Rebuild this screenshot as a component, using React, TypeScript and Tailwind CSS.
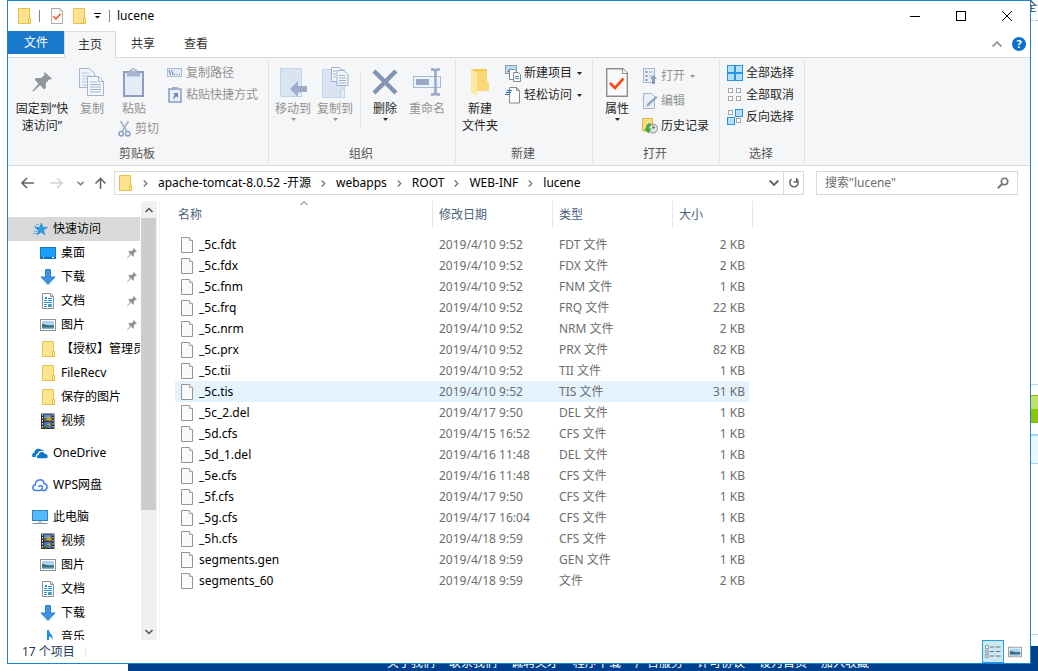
import type { ReactNode } from "react";
import clsx from "clsx";

type IconProps = { className?: string };

const files = [
  { name: "_5c.fdt", date: "2019/4/10 9:52", type: "FDT 文件", size: "2 KB" },
  { name: "_5c.fdx", date: "2019/4/10 9:52", type: "FDX 文件", size: "2 KB" },
  { name: "_5c.fnm", date: "2019/4/10 9:52", type: "FNM 文件", size: "1 KB" },
  { name: "_5c.frq", date: "2019/4/10 9:52", type: "FRQ 文件", size: "22 KB" },
  { name: "_5c.nrm", date: "2019/4/10 9:52", type: "NRM 文件", size: "2 KB" },
  { name: "_5c.prx", date: "2019/4/10 9:52", type: "PRX 文件", size: "82 KB" },
  { name: "_5c.tii", date: "2019/4/10 9:52", type: "TII 文件", size: "1 KB" },
  { name: "_5c.tis", date: "2019/4/10 9:52", type: "TIS 文件", size: "31 KB" },
  { name: "_5c_2.del", date: "2019/4/17 9:50", type: "DEL 文件", size: "1 KB" },
  { name: "_5d.cfs", date: "2019/4/15 16:52", type: "CFS 文件", size: "1 KB" },
  { name: "_5d_1.del", date: "2019/4/16 11:48", type: "DEL 文件", size: "1 KB" },
  { name: "_5e.cfs", date: "2019/4/16 11:48", type: "CFS 文件", size: "1 KB" },
  { name: "_5f.cfs", date: "2019/4/17 9:50", type: "CFS 文件", size: "1 KB" },
  { name: "_5g.cfs", date: "2019/4/17 16:04", type: "CFS 文件", size: "1 KB" },
  { name: "_5h.cfs", date: "2019/4/18 9:59", type: "CFS 文件", size: "1 KB" },
  { name: "segments.gen", date: "2019/4/18 9:59", type: "GEN 文件", size: "1 KB" },
  { name: "segments_60", date: "2019/4/18 9:59", type: "文件", size: "2 KB" },
];

const hoveredFile = "_5c.tis";
const crumbs = ["apache-tomcat-8.0.52 -开源", "webapps", "ROOT", "WEB-INF", "lucene"];
const footerLinks = ["关于我们", "联系我们", "诚聘英才", "程序下载", "广告服务", "许可协议", "设为首页", "加入收藏"];

/* ---------- icons ---------- */

function FolderIcon({ className = "h-4 w-4" }: IconProps) {
  return (
    <svg viewBox="0 0 16 16" className={className} aria-hidden="true">
      <path d="M2.5.5h11v9.5h1v5.5h-12z" fill="#ffe391" stroke="#e9c04b" />
      <path d="M12.5 15V10.5h2V15z" fill="#ffe9a6" stroke="#e9c04b" />
    </svg>
  );
}

function PageIcon({ className = "h-4 w-3" }: IconProps) {
  return (
    <svg viewBox="0 0 12 16" className={className} aria-hidden="true">
      <path d="M.5.5h8l3 3v12H.5z" fill="#f9fafa" stroke="#949494" />
      <path d="M8.5.5v3h3" fill="#fff" stroke="#a5a5a5" />
    </svg>
  );
}

function CheckPageIcon({ className }: IconProps) {
  return (
    <svg viewBox="0 0 22 29" className={className} aria-hidden="true">
      <path d="M.7.7h16l4.6 4.6v23H.7z" fill="#f8fafb" stroke="#8d8d8d" strokeWidth="1.4" />
      <path d="M16.5.7v4.8h4.8" fill="#fff" stroke="#8d8d8d" />
      <path d="M4 15l5 5 8.5-9.5" fill="none" stroke="#f4511e" strokeWidth="2.8" />
    </svg>
  );
}

function PinIcon({ className }: IconProps) {
  return (
    <svg viewBox="0 0 20 20" className={className} fill="#8f979e" aria-hidden="true">
      <path d="M12.500 0l7.500 6.500-2 1.200-1-.3-3.300 4 .3 4.300-1.700 1.700L8 13.200 1.200 19.800.3 19l6.200-7.200-4-4.300L4 6l5 .1 3.700-3.300-.7-1.600z" />
    </svg>
  );
}

function CopyIcon({ className }: IconProps) {
  return (
    <svg viewBox="0 0 26 29" className={className} aria-hidden="true" stroke="#a5b5d1">
      <path d="M.5.5h10l5 5v14H.5z" fill="#eef3fa" />
      <path d="M3 5h7M3 8h9M3 11h9M3 14h9M3 17h9" stroke="#bccbe2" />
      <path d="M8.500 8.500h11l5 5v14h-16z" fill="#f4f8fd" />
      <path d="M19.500 8.500v5h5" fill="none" />
      <path d="M11 14h7M11 16.500h11M11 19h11M11 21.500h11M11 24h11" />
    </svg>
  );
}

function PasteIcon({ className }: IconProps) {
  return (
    <svg viewBox="0 0 22 29" className={className} aria-hidden="true">
      <rect x="1" y="4" width="19" height="24" fill="#e4ecf8" stroke="#8c9dc0" strokeWidth="2" />
      <path d="M4 4.500h13v4H4zM7 1.500h7v3H7z" fill="#a8b4cb" />
      <circle cx="10.500" cy="2" r="2" fill="#a8b4cb" />
      <circle cx="10.500" cy="2.500" r="1" fill="#f5f6f7" />
    </svg>
  );
}

function ScissorsIcon({ className }: IconProps) {
  return (
    <svg viewBox="0 0 13 16" className={className} fill="none" stroke="#8fa2c1" strokeWidth="1.600" aria-hidden="true">
      <path d="M2.500 0L9 10.500M10.500 0L4 10.500" stroke="#a2b1c9" />
      <circle cx="3.200" cy="12.700" r="2.200" />
      <circle cx="9.800" cy="12.700" r="2.200" />
    </svg>
  );
}

function CopyPathIcon({ className }: IconProps) {
  return (
    <svg viewBox="0 0 16 10" className={className} aria-hidden="true">
      <rect x=".5" y=".5" width="14" height="8" fill="#e3ebf7" stroke="#a9b9d5" />
      <path d="M2 2l1.500 5M4.500 2L6 7" stroke="#6c7fa6" />
      <path d="M7 6.500h1M9.500 6.500h1M12 6.500h1" stroke="#6c7fa6" />
    </svg>
  );
}

function PasteShortcutIcon({ className }: IconProps) {
  return (
    <svg viewBox="0 0 14 16" className={className} aria-hidden="true">
      <rect x="1" y="2" width="12" height="13" fill="#eaf1fb" stroke="#8fa2c5" strokeWidth="1.600" />
      <path d="M4 0h6v3H4z" fill="#a2afc9" />
      <path d="M5 6h5v5l-1.700-1.700C7 10.300 6.300 11.500 6 13c-1-2.500-.500-4 .800-5.200z" fill="#6f86b2" />
    </svg>
  );
}

function MoveToIcon({ className }: IconProps) {
  return (
    <svg viewBox="0 0 27 29" className={className} aria-hidden="true">
      <path d="M.5.5h21v28H.5z" fill="#d9e4f3" stroke="#c5d4e9" />
      <path d="M17 24.500h4.500v4H17z" fill="#e5edf8" stroke="#c0cfe6" />
      <path d="M10 21l8-8v5h9v6h-9v5z" fill="#9dadc9" />
    </svg>
  );
}

function CopyToIcon({ className }: IconProps) {
  return (
    <svg viewBox="0 0 27 31" className={className} aria-hidden="true">
      <path d="M.5 2.500h22v28H.5z" fill="#d8e3f3" stroke="#c5d4e9" />
      <path d="M18.500 22.500h4v8h-4z" fill="#e5edf8" stroke="#c0cfe6" />
      <g fill="#f1f6fc" stroke="#9fb0cd">
        <path d="M9.500.5h8l3 3v11h-11z" />
        <path d="M15 3.500h7l4 4v11H15z" />
        <path d="M17 8.500h6M17 11h7M17 13.500h7M17 16h7M11 4h3M11 7h3M11 10h3" />
      </g>
    </svg>
  );
}

function DeleteIcon({ className }: IconProps) {
  return (
    <svg viewBox="0 0 26 26" className={className} aria-hidden="true">
      <path d="M2 2l22 22M24 2L2 24" stroke="#8293b6" strokeWidth="4.500" />
    </svg>
  );
}

function RenameIcon({ className }: IconProps) {
  return (
    <svg viewBox="0 0 29 28" className={className} fill="none" aria-hidden="true">
      <rect x=".5" y="8.500" width="27" height="11" fill="#edf3fb" stroke="#a9bad6" />
      <path d="M3 11h13v6H3z" fill="#96a8c6" />
      <path d="M18 1.500h3l1.500 1.500L24 1.500h3M22.500 3v22M18 26.500h3l1.500-1.500 1.500 1.500h3" stroke="#96a8c6" strokeWidth="2.500" />
    </svg>
  );
}

function BigFolderIcon({ className }: IconProps) {
  return (
    <svg viewBox="0 0 19 28" className={className} aria-hidden="true">
      <path d="M0 1h16v12l2 2v8H6z" fill="#f5c956" />
      <path d="M0 1l6 3v24l-6-4z" fill="#ffe89f" />
      <path d="M6 3h10v11l2 1v8H6z" fill="#f9d775" />
    </svg>
  );
}

function NewItemIcon({ className }: IconProps) {
  return (
    <svg viewBox="0 0 16 17" className={className} aria-hidden="true">
      <rect x=".5" y=".5" width="11" height="8" fill="#b6dcf4" stroke="#8c9da8" />
      <path d="M2 7l3-3 3 3z" fill="#447a8c" />
      <path d="M4.500 4.500h5l2 2v8h-7z" fill="#fff" stroke="#8a8a8a" />
      <path d="M8.500 7.500h5l2 2v7h-7z" fill="#f3f8fc" stroke="#8a8a8a" />
      <path d="M10 11.500h4M10 13.500h4" stroke="#4a90c8" />
    </svg>
  );
}

function EasyAccessIcon({ className }: IconProps) {
  return (
    <svg viewBox="0 0 16 17" className={className} aria-hidden="true">
      <path d="M4.500.5h7l3 3v12.500h-10z" fill="#fafcfd" stroke="#8a8a8a" />
      <path d="M11.500.5v3h3" fill="none" stroke="#8a8a8a" />
      <path d="M2 3.500h5M1 5.500h5M0 7.500h4" stroke="#1e6fc4" />
    </svg>
  );
}

function OpenIcon({ className }: IconProps) {
  return (
    <svg viewBox="0 0 15 16" className={className} aria-hidden="true">
      <rect x=".5" y=".5" width="11" height="14" fill="#eaf0f9" stroke="#a5b5d0" />
      <path d="M2.500 3h2v2h-2zM2.500 7h2v2h-2zM2.500 11h2v2h-2z" fill="#7d90b5" />
      <path d="M6 4h4M6 8h4" stroke="#a5b5d0" />
      <path d="M7 11l3.500-4 3.500 4h-2v5H9v-5z" fill="#8b9dbf" />
    </svg>
  );
}

function EditIcon({ className }: IconProps) {
  return (
    <svg viewBox="0 0 15 16" className={className} aria-hidden="true">
      <path d="M.5.5h8l3 3v12H.5z" fill="#e8eff9" stroke="#a5b5d0" />
      <path d="M3 14l1.500-3.500L13 3l1.500 1.500L6 12.500z" fill="#8fa3c6" />
    </svg>
  );
}

function HistoryIcon({ className }: IconProps) {
  return (
    <svg viewBox="0 0 16 16" className={className} aria-hidden="true">
      <path d="M.5.5h10V13H.5z" fill="#fbdc7f" stroke="#dcb545" />
      <circle cx="11" cy="10.500" r="4.500" fill="#e3e5e7" stroke="#85888c" />
      <path d="M11 7.500v3l2-1.500" stroke="#555" fill="none" />
      <path d="M8 5.500C4.500 6 4 8.500 4.500 11l-2 .3 4 3.700 2.500-4.300-2 .2C6.500 9 7 8 9 7.500z" fill="#2fb53a" stroke="#1b8226" strokeWidth=".4" />
    </svg>
  );
}

function TilesIcon({ filled, className }: IconProps & { filled: number[] }) {
  return (
    <svg viewBox="0 0 16 16" className={className} aria-hidden="true">
      {[0, 1, 2, 3].map((i) => {
        const on = filled.includes(i);
        return (
          <rect
            key={i}
            x={(i % 2) * 8 + (on ? 0.5 : 1.5)}
            y={Math.floor(i / 2) * 8 + (on ? 0.5 : 1.5)}
            width={on ? 7 : 4}
            height={on ? 7 : 4}
            fill={on ? "#b5e0fb" : "#fbfbfb"}
            stroke={on ? "#2b93e6" : "#a8a8a8"}
          />
        );
      })}
    </svg>
  );
}

function StarIcon() {
  return (
    <svg viewBox="0 0 16 16" className="h-4 w-4" aria-hidden="true">
      <path d="M9.500 2l1.300 4.200 4.700.2-3.900 2.600 1.200 4.800-3.700-2.700-4 2.900 1.400-4.600L3 6.600l4.600-.3z" fill="#2a9be6" stroke="#1781cc" strokeWidth=".6" />
      <path d="M4 3.500h3M2 5.500h2M1 12.500h4M2 10.500h3" stroke="#5bb3ee" />
    </svg>
  );
}

function DesktopIcon() {
  return (
    <svg viewBox="0 0 16 16" className="h-4 w-4" aria-hidden="true">
      <rect x=".5" y="2.500" width="15" height="11" fill="#1a9fff" stroke="#1078c8" />
      <path d="M1 12.500h14" stroke="#0a5fa6" />
      <path d="M3 12.500h1M12 12.500h2" stroke="#fff" />
    </svg>
  );
}

function DownloadIcon() {
  return (
    <svg viewBox="0 0 16 16" className="h-4 w-4" aria-hidden="true">
      <path d="M5.500.5h5v7.500h4.500L8 15.500 1 8h4.500z" fill="#3a94e4" stroke="#2b7fd0" />
    </svg>
  );
}

function DocumentIcon() {
  return (
    <svg viewBox="0 0 16 16" className="h-4 w-4" aria-hidden="true">
      <path d="M2.500.5h8l3 3v12h-11z" fill="#fff" stroke="#8f8f8f" />
      <path d="M10.500.5v3h3" fill="none" stroke="#8f8f8f" />
      <path d="M4 7.500h3M8 5.500h4M8 7.500h4M4 9.500h8M4 11.500h3M4 13.500h3" stroke="#2196e8" />
      <path d="M5 4h2v2H5z" fill="#2196e8" />
      <path d="M8 11h4v3H8z" fill="#5d9ab0" />
    </svg>
  );
}

function PictureIcon({ className = "h-4 w-4" }: IconProps) {
  return (
    <svg viewBox="0 0 16 16" className={className} aria-hidden="true">
      <rect x=".5" y="2.500" width="15" height="11" fill="#fff" stroke="#919191" />
      <path d="M2 4h12v8H2z" fill="#a9d3f5" />
      <path d="M2 7c3-.5 4 2 12 1v3H2z" fill="#3d6c76" />
      <path d="M2 10.500h12V12H2z" fill="#7fb0cb" />
    </svg>
  );
}

function VideoIcon() {
  return (
    <svg viewBox="0 0 16 16" className="h-4 w-4" aria-hidden="true">
      <path d="M1 .5h13.500V16H1z" fill="#333" />
      <path d="M2.500 1v15M13 1v15" stroke="#eee" strokeDasharray="1.500 1.500" />
      <path d="M4 1.500h7.500v6H4z" fill="#5b8ddb" />
      <path d="M4 9h7.500v6H4z" fill="#4673c2" />
      <path d="M6 5l2-2 3.500 3v1.500H6zM7 12l2-2 2 3z" fill="#d9a520" />
      <path d="M4 5.500h3v2H4zM4 13h4v2H4z" fill="#3d7a3a" />
    </svg>
  );
}

function OneDriveIcon() {
  return (
    <svg viewBox="0 0 16 16" className="h-4 w-4" fill="#0f75d1" aria-hidden="true">
      <path d="M.5 12C-.5 9 1 7.800 2.500 7.600 2.500 4.500 6 2.500 9 4.500c1.500-.3 2.500.5 3 1.700C8 5 6 7 5.500 9 3.500 9.500 3.500 11 4 12z" />
      <path d="M6.500 13.300c-2.500-.3-2-3.300.2-3.300.3-3.500 5.300-4 6.300-.9 2.800-.2 3.700 3.200 1.500 4.200z" />
    </svg>
  );
}

function CloudIcon() {
  return (
    <svg viewBox="0 0 16 16" className="h-4 w-4" fill="none" stroke="#3f7de8" strokeWidth="1.500" aria-hidden="true">
      <path d="M10.500 9.500c.3 2-1 4-3 4H4C0 13.500 0 8.500 3.300 8 3 2 11 1 12 6.500c4 .5 4 6.500 0 7H10" />
      <path d="M6.500 10c.5-1.500 2.500-1.800 4-.3" />
    </svg>
  );
}

function ComputerIcon() {
  return (
    <svg viewBox="0 0 16 16" className="h-4 w-4" aria-hidden="true">
      <rect x=".5" y="1.500" width="15" height="10" fill="#52bafb" stroke="#3282b8" />
      <path d="M6 13h4" stroke="#8aa5b5" />
      <path d="M.5 14.500h15" stroke="#7e98a8" />
    </svg>
  );
}

function MusicIcon() {
  return (
    <svg viewBox="0 0 16 16" className="h-4 w-4" aria-hidden="true">
      <path d="M7 1h2c0 4 4.500 4 3.500 10.500C12 8.500 11 7.500 9 7.500V14H7z" fill="#1690ea" />
      <ellipse cx="6.500" cy="13.500" rx="3" ry="2" fill="#1690ea" />
    </svg>
  );
}

function Chevron({ className, thin }: IconProps & { thin?: boolean }) {
  return (
    <svg
      viewBox="0 0 8 8"
      className={className}
      fill="none"
      stroke="currentColor"
      strokeWidth={thin ? 1 : 1.5}
      aria-hidden="true">
      <path d="M.5 2L4 5.500 7.500 2" />
    </svg>
  );
}

function Caret({ className }: IconProps) {
  return (
    <svg viewBox="0 0 5 3" className={clsx("h-[3px] w-[5px] shrink-0", className)} fill="currentColor" aria-hidden="true">
      <path d="M0 0h5L2.500 3z" />
    </svg>
  );
}

/* ---------- ribbon ---------- */

function LargeButton({
  icon,
  lines,
  caret,
  disabled,
  className,
}: {
  icon: ReactNode;
  lines: string[];
  caret?: boolean;
  disabled?: boolean;
  className?: string;
}) {
  return (
    <button
      disabled={disabled}
      className={clsx("flex shrink-0 flex-col items-center whitespace-nowrap", disabled ? "text-[#929292]" : "text-[#262626]", className)}>
      <span className="flex h-8 items-center">{icon}</span>
      <span className="mt-0.5 flex flex-col leading-[17px]">
        {lines.map((line) => (
          <span key={line}>{line}</span>
        ))}
      </span>
      {caret && <Caret className="mt-px" />}
    </button>
  );
}

function SmallButton({
  icon,
  label,
  caret,
  disabled,
}: {
  icon: ReactNode;
  label: string;
  caret?: boolean;
  disabled?: boolean;
}) {
  return (
    <button
      disabled={disabled}
      className={clsx("flex h-[22px] items-center whitespace-nowrap", disabled ? "text-[#929292]" : "text-[#262626]")}>
      <span className="mr-[3px] flex w-4 justify-center">{icon}</span>
      {label}
      {caret && <Caret className="ml-[5px]" />}
    </button>
  );
}

function RibbonGroup({ title, className, children }: { title: string; className: string; children: ReactNode }) {
  return (
    <section aria-label={title} className={clsx("my-0.5 flex shrink-0 flex-col border-r border-[#dfe1e3]", className)}>
      <div className="flex flex-1 items-start">{children}</div>
      <h2 className="h-[18px] pr-0.5 text-center leading-[18px] text-[#555]">{title}</h2>
    </section>
  );
}

function Ribbon() {
  return (
    <div className="flex h-[108px] shrink-0 overflow-hidden border-b border-[#dadbdc] bg-[#f5f6f7]">
      <RibbonGroup title="剪贴板" className="w-[261px]">
        <LargeButton className="ml-1.5 mt-1.5 w-14" lines={["固定到“快", "速访问”"]} icon={<PinIcon className="h-5 w-5" />} />
        <LargeButton className="mt-1.5 w-11" disabled lines={["复制"]} icon={<CopyIcon className="h-[29px] w-[26px]" />} />
        <div className="mt-1.5 flex w-[50px] flex-col items-start gap-px pl-0.5">
          <LargeButton className="w-9" disabled lines={["粘贴"]} icon={<PasteIcon className="h-[29px] w-[22px]" />} />
          <SmallButton disabled label="剪切" icon={<ScissorsIcon className="h-4 w-[13px]" />} />
        </div>
        <div className="mt-0.5 flex flex-col pl-[3px]">
          <SmallButton disabled label="复制路径" icon={<CopyPathIcon className="h-2.5 w-4" />} />
          <SmallButton disabled label="粘贴快捷方式" icon={<PasteShortcutIcon className="h-4 w-3.5" />} />
        </div>
      </RibbonGroup>
      <RibbonGroup title="组织" className="w-[187px]">
        <LargeButton className="ml-[3px] mt-1.5 w-[42px]" disabled caret lines={["移动到"]} icon={<MoveToIcon className="h-[29px] w-[27px]" />} />
        <LargeButton className="mt-1.5 w-[42px]" disabled caret lines={["复制到"]} icon={<CopyToIcon className="h-[31px] w-[27px]" />} />
        <span className="ml-1 mt-3 h-14 border-r border-[#dfe1e3]" />
        <LargeButton className="ml-1 mt-1.5 w-10" caret lines={["删除"]} icon={<DeleteIcon className="h-[26px] w-[26px]" />} />
        <LargeButton className="mt-1.5 w-11" disabled lines={["重命名"]} icon={<RenameIcon className="h-7 w-[29px]" />} />
      </RibbonGroup>
      <RibbonGroup title="新建" className="w-[137px]">
        <LargeButton className="ml-0.5 mt-1.5 w-11" lines={["新建", "文件夹"]} icon={<BigFolderIcon className="h-7 w-[19px]" />} />
        <div className="mt-0.5 flex flex-col pl-[3px]">
          <SmallButton caret label="新建项目" icon={<NewItemIcon className="h-[17px] w-4" />} />
          <SmallButton caret label="轻松访问" icon={<EasyAccessIcon className="h-[17px] w-4" />} />
        </div>
      </RibbonGroup>
      <RibbonGroup title="打开" className="w-[127px]">
        <LargeButton className="ml-1 mt-1.5 w-10" caret lines={["属性"]} icon={<CheckPageIcon className="h-[29px] w-[22px]" />} />
        <div className="mt-[5px] flex flex-col gap-[3px] pl-[5px]">
          <SmallButton disabled caret label="打开" icon={<OpenIcon className="h-4 w-[15px]" />} />
          <SmallButton disabled label="编辑" icon={<EditIcon className="h-4 w-[15px]" />} />
          <SmallButton label="历史记录" icon={<HistoryIcon className="h-4 w-4" />} />
        </div>
      </RibbonGroup>
      <RibbonGroup title="选择" className="w-[85px]">
        <div className="mt-0.5 flex flex-col pl-[7px]">
          <SmallButton label="全部选择" icon={<TilesIcon filled={[0, 1, 2, 3]} className="h-4 w-4" />} />
          <SmallButton label="全部取消" icon={<TilesIcon filled={[]} className="h-4 w-4" />} />
          <SmallButton label="反向选择" icon={<TilesIcon filled={[1, 2]} className="h-4 w-4" />} />
        </div>
      </RibbonGroup>
    </div>
  );
}

/* ---------- window chrome ---------- */

function TitleBar() {
  return (
    <header className="flex h-[30px] shrink-0 items-center">
      <FolderIcon className="ml-2 h-4 w-4" />
      <span className="ml-[7px] h-3 border-r border-[#888]" />
      <button aria-label="属性" className="ml-[11px]">
        <CheckPageIcon className="h-4 w-3" />
      </button>
      <button aria-label="新建文件夹" className="ml-2">
        <FolderIcon />
      </button>
      <button aria-label="自定义快速访问工具栏" className="ml-[7px]">
        <svg viewBox="0 0 7 6" className="h-1.5 w-[7px]" aria-hidden="true">
          <path d="M0 .5h7" stroke="#000" />
          <path d="M1 3h5L3.500 5.500z" />
        </svg>
      </button>
      <span className="ml-2 h-3 border-r border-[#888]" />
      <h1 className="ml-[7px] flex-1">lucene</h1>
      <button aria-label="最小化" className="flex h-full w-[46px] items-center justify-center">
        <span className="w-2.5 border-t border-black" />
      </button>
      <button aria-label="最大化" className="flex h-full w-[46px] items-center justify-center">
        <span className="h-2.5 w-2.5 border border-black" />
      </button>
      <button aria-label="关闭" className="flex h-full w-[46px] items-center justify-center">
        <svg viewBox="0 0 10 10" className="h-2.5 w-2.5" stroke="#000" aria-hidden="true">
          <path d="M0 0l10 10M10 0L0 10" />
        </svg>
      </button>
    </header>
  );
}

function Tabs() {
  return (
    <nav className="flex h-[27px] shrink-0 text-[#333]">
      <div className="border-b border-[#dadbdc]">
        <button className="h-[23px] w-14 bg-[#1979ca] text-white">文件</button>
      </div>
      <button className="w-[52px] border-x border-t border-[#dadbdc] bg-[#f5f6f7]">主页</button>
      <button className="w-[54px] border-b border-[#dadbdc]">共享</button>
      <button className="w-[52px] border-b border-[#dadbdc]">查看</button>
      <div className="flex flex-1 items-center justify-end gap-2.5 border-b border-[#dadbdc] pr-1">
        <button aria-label="最小化功能区" className="text-[#999]">
          <Chevron className="h-2.5 w-2.5 rotate-180" />
        </button>
        <button aria-label="帮助" className="flex h-3.5 w-3.5 items-center justify-center rounded-full bg-[#0b6fcb] text-[11px] font-bold leading-[14px] text-white">
          ?
        </button>
      </div>
    </nav>
  );
}

function ArrowButton({ label, className, d }: { label: string; className: string; d: string }) {
  return (
    <button aria-label={label} className={className}>
      <svg viewBox="0 0 13 12" className="h-3 w-[13px]" fill="none" stroke="currentColor" strokeWidth="1.600" aria-hidden="true">
        <path d={d} />
      </svg>
    </button>
  );
}

function AddressRow() {
  return (
    <div className="mb-px flex h-[34px] shrink-0 items-center pr-3">
      <ArrowButton label="后退" className="ml-[13px] text-[#666]" d="M13 6H1.500M6 1L1 6l5 5" />
      <ArrowButton label="前进" className="ml-4 text-[#d2d2d2]" d="M0 6h11.500M7 1l5 5-5 5" />
      <button aria-label="最近浏览的位置" className="ml-3.5 text-[#777]">
        <Chevron className="h-[7px] w-[7px]" />
      </button>
      <ArrowButton label="上移" className="ml-2.5 text-[#666]" d="M6.500 12V1.500M1.500 6.500l5-5 5 5" />
      <div className="ml-[7px] flex h-6 min-w-0 flex-1 items-center border border-[#d9d9d9]">
        <FolderIcon className="ml-0.5 h-4 w-4 shrink-0" />
        <ol className="flex flex-1 items-center whitespace-nowrap">
          {crumbs.map((crumb) => (
            <li key={crumb} className="flex items-center">
              <span className="flex w-[25px] justify-center text-[#777]">
                <Chevron className="h-[7px] w-[7px] -rotate-90" />
              </span>
              <a href="#" className="text-black">
                {crumb}
              </a>
            </li>
          ))}
        </ol>
        <button aria-label="以前的位置" className="mr-1 text-[#666]">
          <Chevron className="h-2.5 w-2.5" />
        </button>
        <button aria-label="刷新" className="flex h-full w-5 items-center justify-center border-l border-[#d9d9d9] text-[#666]">
          <svg viewBox="0 0 12 12" className="h-3 w-3" fill="none" stroke="currentColor" strokeWidth="1.500" aria-hidden="true">
            <path d="M8.500 2.200A4.200 4.200 0 1 1 3.500 2.200" />
            <path d="M5.500 5h3.200V1" />
          </svg>
        </button>
      </div>
      <div className="ml-3 flex h-6 w-[202px] shrink-0 items-center border border-[#d9d9d9] pr-2">
        <input
          aria-label="搜索"
          placeholder='搜索"lucene"'
          className="min-w-0 flex-1 pl-2 outline-none placeholder:text-[#6d6d6d]"
        />
        <svg viewBox="0 0 12 12" className="h-3 w-3" fill="none" stroke="#777" aria-hidden="true">
          <circle cx="7.500" cy="4.500" r="3.200" strokeWidth="1.600" />
          <path d="M5 7L.8 11.200" strokeWidth="2" />
        </svg>
      </div>
    </div>
  );
}

function NavItem({
  icon,
  label,
  root,
  pinned,
  active,
  className,
}: {
  icon: ReactNode;
  label: string;
  root?: boolean;
  pinned?: boolean;
  active?: boolean;
  className?: string;
}) {
  return (
    <li className={className}>
      <a
        href="#"
        className={clsx(
          "flex h-6 items-center gap-[5px] overflow-hidden whitespace-nowrap pr-[3px] text-black",
          root ? "pl-6" : "pl-8",
          active && "bg-[#d9d9d9]"
        )}>
        <span className="shrink-0">{icon}</span>
        <span className="flex-1">{label}</span>
        {pinned && <PinIcon className="h-2.5 w-2.5 shrink-0" />}
      </a>
    </li>
  );
}

function Sidebar() {
  return (
    <div className="flex w-[152px] shrink-0 gap-px overflow-hidden border-r border-[#f3f3f3]">
      <ul className="min-h-0 w-[132px] overflow-hidden pt-4">
        <NavItem root active icon={<StarIcon />} label="快速访问" />
        <NavItem pinned icon={<DesktopIcon />} label="桌面" />
        <NavItem pinned icon={<DownloadIcon />} label="下载" />
        <NavItem pinned icon={<DocumentIcon />} label="文档" />
        <NavItem pinned icon={<PictureIcon />} label="图片" />
        <NavItem icon={<FolderIcon />} label="【授权】管理员" />
        <NavItem icon={<FolderIcon />} label="FileRecv" />
        <NavItem icon={<FolderIcon />} label="保存的图片" />
        <NavItem icon={<VideoIcon />} label="视频" />
        <NavItem root className="mt-2" icon={<OneDriveIcon />} label="OneDrive" />
        <NavItem root className="mt-2" icon={<CloudIcon />} label="WPS网盘" />
        <NavItem root className="mt-2" icon={<ComputerIcon />} label="此电脑" />
        <NavItem icon={<VideoIcon />} label="视频" />
        <NavItem icon={<PictureIcon />} label="图片" />
        <NavItem icon={<DocumentIcon />} label="文档" />
        <NavItem icon={<DownloadIcon />} label="下载" />
        <NavItem icon={<MusicIcon />} label="音乐" />
      </ul>
      <div className="flex w-4 flex-col bg-[#f0f0f0] text-[#505050]">
        <button aria-label="向上滚动" className="flex h-[17px] items-center justify-center">
          <Chevron className="h-2 w-2 rotate-180" />
        </button>
        <div className="mr-px flex-1">
          <div className="h-[72%] bg-[#cdcdcd]" />
        </div>
        <button aria-label="向下滚动" className="flex h-[17px] items-center justify-center">
          <Chevron className="h-2 w-2" />
        </button>
      </div>
    </div>
  );
}

function FileList() {
  return (
    <div className="min-w-0 flex-1 overflow-hidden pl-[15px]">
      <table className="w-[578px] table-fixed border-separate border-spacing-0 text-left">
        <colgroup>
          <col className="w-[258px]" />
          <col className="w-[120px]" />
          <col className="w-[120px]" />
          <col className="w-[76px]" />
          <col className="w-1" />
        </colgroup>
        <thead>
          <tr className="h-[27px] text-[#4c607a]">
            <th className="relative border-r border-[#e5e5e5] pl-[3px] font-normal">
              名称
              <Chevron thin className="absolute -top-0.5 left-1/2 h-2 w-2 -translate-x-1/2 rotate-180" />
            </th>
            <th className="border-r border-[#e5e5e5] pl-1.5 font-normal">修改日期</th>
            <th className="border-r border-[#e5e5e5] pl-1.5 font-normal">类型</th>
            <th className="pl-1.5 font-normal">大小</th>
            <th className="border-r border-[#e5e5e5]" />
          </tr>
        </thead>
        <tbody>
          <tr className="h-1.5" aria-hidden="true" />
          {files.map((file) => {
            const bg = file.name === hoveredFile ? "bg-[#e5f3ff]" : "";
            return (
              <tr key={file.name} className="h-[21px] text-[#6d6d6d]">
                <td className={bg}>
                  <span className="flex items-center gap-1.5 pl-1.5 text-black">
                    <PageIcon />
                    {file.name}
                  </span>
                </td>
                <td className={clsx("pl-1.5", bg)}>{file.date}</td>
                <td className={clsx("pl-1.5", bg)}>{file.type}</td>
                <td className={clsx("pr-1 text-right", bg)}>{file.size}</td>
                <td />
              </tr>
            );
          })}
        </tbody>
      </table>
    </div>
  );
}

function StatusBar() {
  return (
    <footer className="flex h-[23px] shrink-0 items-center pr-2 text-[#1e395b]">
      <span className="ml-3.5">{files.length} 个项目</span>
      <span className="ml-2.5 h-3 border-r border-[#e8e8e8]" />
      <button aria-label="详细信息" className="ml-auto flex h-full w-[22px] items-center justify-center border border-[#26a0da] bg-[#cbe8f6]">
        <svg viewBox="0 0 16 14" className="h-3.5 w-4" fill="none" aria-hidden="true">
          <path d="M.5.5h3v3h-3zM.5 5h3v3h-3zM.5 9.500h3v3h-3z" fill="#fff" stroke="#999" />
          <path d="M5 2h4M10.500 2h5M5 6.500h4M10.500 6.500h5M5 11h4M10.500 11h5" stroke="#6d7478" />
          <path d="M1.500 11h1" stroke="#d33" />
          <path d="M1.500 6.500h1" stroke="#39c" />
        </svg>
      </button>
      <button aria-label="大缩略图" className="ml-1">
        <PictureIcon className="h-3.5 w-3.5" />
      </button>
    </footer>
  );
}

/* The web page that shows around the edges of the window */
function PageBehind() {
  return (
    <div className="absolute inset-0 flex flex-col overflow-hidden bg-white">
      <div className="flex w-[13px] flex-1 flex-col self-end overflow-hidden">
        <span className="whitespace-nowrap leading-[14px] text-[#333]">全部</span>
        <span className="mt-1.5 border-t border-dashed border-[#bbb]" />
        <span className="mt-[363px] border-t border-[#b8d8ee]" />
        <span className="mt-2.5 h-7 shrink-0 border-y border-[#8ab800] bg-linear-to-b from-[#bfe35f] from-50% to-[#8fc400] to-50%" />
        <span className="mt-[11px] h-[30px] shrink-0 border-b border-t-2 border-[#a5d3f0] bg-[#eaf7ff]" />
        <span className="mt-[170px] border-t border-[#a9d5f2]" />
      </div>
      <div className="ml-32 flex h-[25px] shrink-0 items-end gap-3.5 whitespace-nowrap bg-[#00418f] pl-[259px] text-white">
        {footerLinks.map((link) => (
          <a key={link} href="#" className="leading-4">
            {link}
          </a>
        ))}
      </div>
    </div>
  );
}

export default function App() {
  return (
    <div className="relative flex h-screen flex-col overflow-hidden px-[7px] pb-[7px] font-['Noto_Sans','Noto_Sans_CJK_SC',sans-serif] text-xs">
      <PageBehind />
      <main className="relative flex min-h-0 flex-1 flex-col border border-[#1883d7] bg-white">
        <TitleBar />
        <Tabs />
        <Ribbon />
        <AddressRow />
        <div className="flex min-h-0 flex-1">
          <Sidebar />
          <FileList />
        </div>
        <StatusBar />
      </main>
    </div>
  );
}
